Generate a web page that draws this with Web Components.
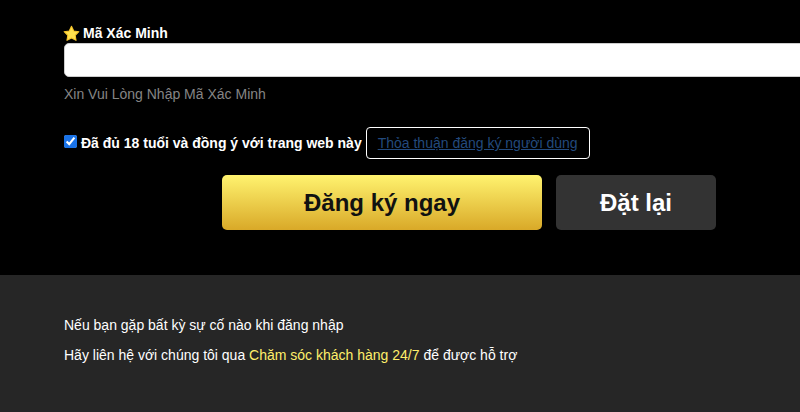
<!DOCTYPE html>
<html lang="vi">
<head>
<meta charset="utf-8">
<title>Đăng ký</title>
<style>
  html, body { margin: 0; height: 412px; overflow: hidden; background: #000; }
  body { font: 14px "Liberation Sans", Arial, sans-serif; color: #fff; }
</style>
</head>
<body>
<register-page>
  <register-form></register-form>
  <help-footer></help-footer>
</register-page>

<script>
const defineShadow = (name, html) => {
  const template = document.createElement("template");
  template.innerHTML = html;
  customElements.define(name, class extends HTMLElement {
    constructor() {
      super();
      this.attachShadow({ mode: "open" });
      this.shadowRoot.appendChild(template.content.cloneNode(true));
    }
  });
};

defineShadow("register-page", `
  <style>
    :host { display: flex; flex-direction: column; height: 412px; overflow: hidden; }
  </style>
  <slot></slot>
`);

defineShadow("register-form", `
  <style>
    :host { display: block; height: 275px; box-sizing: border-box; background: #000; padding: 25px 0 0 63px; overflow: hidden; }
    .label { display: flex; align-items: center; gap: 3px; height: 16px; font-weight: bold; font-size: 14px; line-height: 16px; }
    .label svg { width: 17px; height: 17px; flex: none; }
    input.code {
      display: block; box-sizing: border-box; width: 780px; height: 34px; margin: 2px 0 0 1px;
      background: #fff; border: 1px solid #ccc; border-radius: 5px; padding: 0 12px; outline: none;
    }
    .hint { margin: 9px 0 0 1px; height: 16px; line-height: 16px; font-size: 14px; color: #858585; }
    .agree { display: flex; align-items: center; margin: 25px 0 0 1px; height: 32px; }
    .agree input { width: 13px; height: 13px; margin: 0 4px 3px 0; accent-color: #1a73e8; }
    .agree span { font-weight: bold; font-size: 14px; margin-bottom: 1px; }
    .terms {
      display: block; box-sizing: border-box; height: 32px; line-height: 30px; margin-left: 4px; padding: 0 11px;
      border: 1px solid #fff; border-radius: 4px; color: #234a7d; font-size: 14px; text-decoration: underline;
    }
    .actions { display: flex; gap: 14px; margin: 16px 0 0 159px; }
    button {
      box-sizing: border-box; height: 55px; border: 0; border-radius: 5px; padding: 0;
      font: bold 24px "Liberation Sans", Arial, sans-serif;
    }
    .submit { width: 320px; color: #111; background: linear-gradient(#fff36f, #d9a928); }
    .reset { width: 160px; color: #fff; background: #333; }
  </style>
  <div class="label">
    <svg viewBox="0 0 24 24" aria-hidden="true"><path fill="#ffe14d" stroke="#f7c52b" stroke-width="1.5" stroke-linejoin="round" d="M12 1.8l3.2 6.6 7.2 1-5.2 5.1 1.2 7.2-6.4-3.4-6.4 3.4 1.2-7.2L1.6 9.4l7.2-1z"/></svg>
    Mã Xác Minh
  </div>
  <input class="code" type="text">
  <p class="hint">Xin Vui Lòng Nhập Mã Xác Minh</p>
  <div class="agree">
    <input type="checkbox" checked>
    <span>Đã đủ 18 tuổi và đồng ý với trang web này</span>
    <a class="terms">Thỏa thuận đăng ký người dùng</a>
  </div>
  <div class="actions">
    <button class="submit">Đăng ký ngay</button>
    <button class="reset">Đặt lại</button>
  </div>
`);

defineShadow("help-footer", `
  <style>
    :host { display: block; flex: 1; background: #262626; padding: 42px 0 0 64px; font-size: 14px; color: #fff; }
    p { margin: 0 0 14px; line-height: 16px; }
    em { font-style: normal; color: #ffef6b; }
  </style>
  <p>Nếu bạn gặp bất kỳ sự cố nào khi đăng nhập</p>
  <p>Hãy liên hệ với chúng tôi qua <em>Chăm sóc khách hàng 24/7</em> để được hỗ trợ</p>
`);
</script>
</body>
</html>
